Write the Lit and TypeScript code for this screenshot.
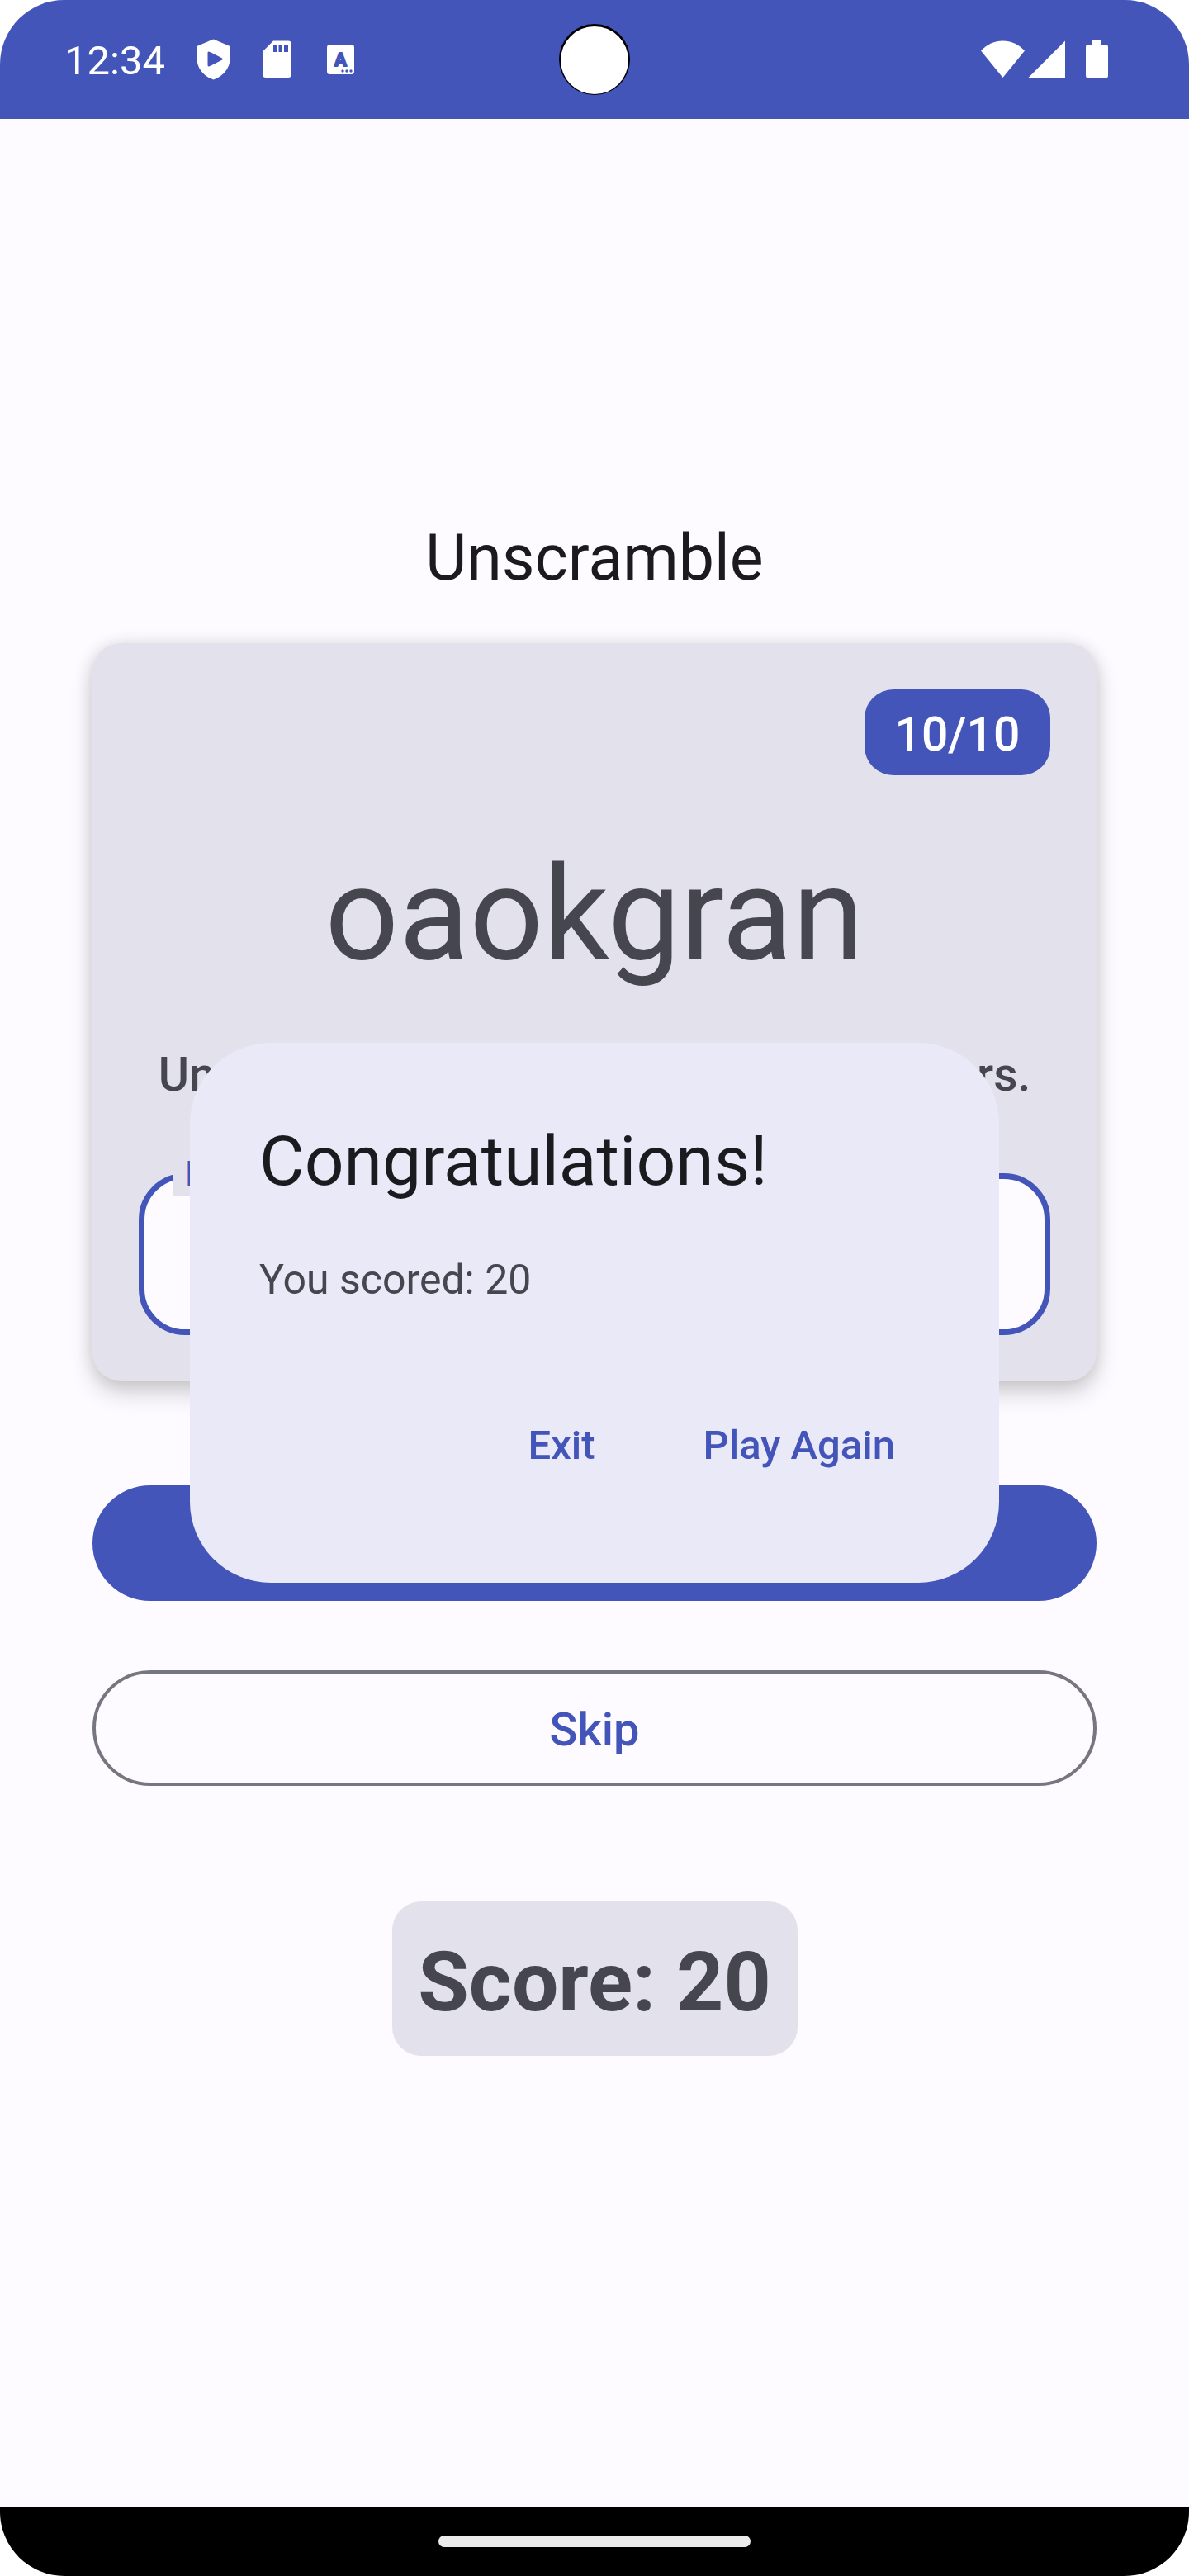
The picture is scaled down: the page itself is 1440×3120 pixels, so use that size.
import { LitElement, html, css } from "lit";
import { customElement, property, state } from "lit/decorators.js";

@customElement("status-bar")
class StatusBar extends LitElement {
  @property() time = "12:34";

  static styles = css`
    :host {
      display: block;
      background: #4355b9;
      color: #fff;
    }
    .bar {
      position: relative;
      display: flex;
      align-items: center;
      justify-content: space-between;
      height: 144px;
      padding: 0 98px 0 78px;
    }
    .group {
      display: flex;
      align-items: center;
    }
    .time {
      font-size: 49px;
      line-height: 56px;
      margin-right: 38px;
      padding-top: 4px;
    }
    svg {
      display: block;
      fill: #fff;
    }
    .shield {
      margin-right: 39px;
    }
    .sd {
      margin-right: 43px;
    }
    .glyph {
      fill: #4355b9;
      stroke: #4355b9;
      stroke-width: 2;
      stroke-linejoin: round;
      font: 700 22px Roboto, sans-serif;
    }
    .cut {
      fill: #4355b9;
      stroke: #4355b9;
      stroke-linejoin: round;
    }
    .slot {
      fill: #4355b9;
    }
    .wifi {
      margin-right: 4px;
    }
    .signal {
      margin-right: 25px;
    }
    .camera {
      position: absolute;
      left: 50%;
      top: 29px;
      width: 86px;
      height: 86px;
      transform: translateX(-50%);
    }
  `;

  render() {
    return html`
      <div class="bar">
        <div class="group">
          <span class="time">${this.time}</span>
          <svg class="shield" width="41" height="50" viewBox="0 0 41 50" aria-hidden="true">
            <path d="M20.5 0.5 40.5 9v15c0 12-8.500 21.500-20 25.500C9 45.500.5 36 .5 24V9Z" />
            <path class="cut" stroke-width="3" d="M15 17v15L30 24.500Z" />
          </svg>
          <svg class="sd" width="35" height="46" viewBox="0 0 35 46" aria-hidden="true">
            <path d="M13 0.500H31a4 4 0 0 1 4 4V41a4 4 0 0 1-4 4H4a4 4 0 0 1-4-4V13.500Z" />
            <path class="slot" d="M13 5.500h4.500v8.500H13zM19.500 5.500H24v8.500h-4.500zM26 5.500h5v8.500h-5z" />
          </svg>
          <svg width="33" height="38" viewBox="0 0 33 38" aria-hidden="true">
            <rect y="1" width="33" height="36" rx="3.500" />
            <text class="glyph" x="16.500" y="26.500" text-anchor="middle">A</text>
            <circle class="slot" cx="19" cy="33" r="1.700" />
            <circle class="slot" cx="24" cy="33" r="1.700" />
            <circle class="slot" cx="29" cy="33" r="1.700" />
          </svg>
        </div>
        <svg class="camera" viewBox="0 0 86 86" aria-hidden="true">
          <circle cx="43" cy="43" r="43" fill="#000" />
          <circle cx="43" cy="44" r="41" />
        </svg>
        <div class="group">
          <svg class="wifi" width="53" height="46" viewBox="0 0 53 46" aria-hidden="true">
            <path d="M0 12.500C7.500 4.500 16.500 0.500 26.500 0.500S45.500 4.500 53 12.500L26.500 45Z" />
          </svg>
          <svg class="signal" width="45" height="46" viewBox="0 0 45 46" aria-hidden="true">
            <path d="M45 0.500V45H0.500Z" />
          </svg>
          <svg width="27" height="46" viewBox="0 0 27 46" aria-hidden="true">
            <path d="M8 0h11v5h5a3 3 0 0 1 3 3v34.500a3 3 0 0 1-3 3H3a3 3 0 0 1-3-3V8a3 3 0 0 1 3-3h5Z" />
          </svg>
        </div>
      </div>
    `;
  }
}

@customElement("game-card")
class GameCard extends LitElement {
  @property() word = "";
  @property() count = "";

  static styles = css`
    :host {
      display: block;
    }
    .card {
      display: flex;
      flex-direction: column;
      padding: 56px;
      border-radius: 35px;
      background: #e2e1ec;
      color: #46464f;
      text-align: center;
      box-shadow: 0 14px 28px rgba(0, 0, 0, 0.18), 0 0 20px rgba(0, 0, 0, 0.1);
    }
    .count {
      box-sizing: border-box;
      align-self: flex-end;
      min-width: 225px;
      padding: 20px 35px 14px;
      border-radius: 35px;
      background: #4355b9;
      color: #fff;
      font-size: 57px;
      font-weight: 500;
      line-height: 70px;
    }
    .word {
      margin: 56px 0 0;
      font-size: 157px;
      font-weight: 400;
      line-height: 224px;
    }
    .hint {
      margin: 50px 0 0;
      font-size: 57px;
      font-weight: 500;
      line-height: 66px;
    }
    .field {
      position: relative;
      margin-top: 86px;
    }
    .label {
      position: absolute;
      left: 42px;
      top: -28px;
      padding: 2px 14px 0;
      background: #e2e1ec;
      color: #4355b9;
      font-size: 42px;
      line-height: 54px;
    }
    .input {
      display: block;
      box-sizing: border-box;
      width: 100%;
      height: 196px;
      padding: 0 56px;
      border: 7px solid #4355b9;
      border-radius: 56px;
      outline: none;
      background: #fdfbff;
      color: #1b1b1f;
      font: 400 56px/84px Roboto, sans-serif;
    }
  `;

  render() {
    return html`
      <section class="card">
        <div class="count">${this.count}</div>
        <h2 class="word">${this.word}</h2>
        <p class="hint">Unscramble the word using all the letters.</p>
        <div class="field">
          <input class="input" id="guess" type="text" autocomplete="off" />
          <label class="label" for="guess">Enter your word</label>
        </div>
      </section>
    `;
  }
}

@customElement("result-dialog")
class ResultDialog extends LitElement {
  @property({ type: Number }) score = 0;

  static styles = css`
    :host {
      display: block;
    }
    .dialog {
      box-sizing: border-box;
      width: 980px;
      max-width: 100%;
      padding: 88px 84px 84px;
      border-radius: 98px;
      background: #e9e9f7;
    }
    .title {
      margin: 0;
      color: #1b1b1f;
      font-size: 84px;
      font-weight: 400;
      line-height: 112px;
    }
    .text {
      margin: 52px 0 80px;
      color: #46464f;
      font-size: 50px;
      line-height: 70px;
    }
    .actions {
      display: flex;
      justify-content: flex-end;
      gap: 28px;
    }
    .action {
      min-width: 203px;
      height: 168px;
      padding: 4px 42px 0;
      border: 0;
      background: none;
      color: #4355b9;
      font: 500 49px/70px Roboto, sans-serif;
      cursor: pointer;
    }
  `;

  private send(name: string) {
    this.dispatchEvent(new CustomEvent(name));
  }

  render() {
    return html`
      <div class="dialog" role="dialog" aria-labelledby="title">
        <h2 class="title" id="title">Congratulations!</h2>
        <p class="text">You scored: ${this.score}</p>
        <div class="actions">
          <button class="action" @click=${() => this.send("exit")}>Exit</button>
          <button class="action" @click=${() => this.send("replay")}>Play Again</button>
        </div>
      </div>
    `;
  }
}

@customElement("app-root")
class AppRoot extends LitElement {
  @state() private open = true;
  @state() private score = 20;

  static styles = css`
    :host {
      display: block;
      background: #fff;
      font-family: Roboto, sans-serif;
    }
    .screen {
      display: flex;
      flex-direction: column;
      min-height: 100vh;
      border-radius: 78px;
      overflow: hidden;
      background: #fdfbff;
    }
    .main {
      position: relative;
      flex: 1;
      display: flex;
      flex-direction: column;
      justify-content: center;
      padding: 0 112px 64px;
    }
    .heading {
      margin: 0 0 54px;
      color: #1b1b1f;
      font-size: 77px;
      font-weight: 400;
      line-height: 98px;
      text-align: center;
    }
    .buttons {
      display: flex;
      flex-direction: column;
      gap: 84px;
      margin: 126px 0 140px;
    }
    .button {
      height: 140px;
      padding: 4px 84px 0;
      border: 0;
      border-radius: 70px;
      background: #4355b9;
      color: #fff;
      font: 500 56px/66px Roboto, sans-serif;
      cursor: pointer;
    }
    .outlined {
      border: 4px solid #767680;
      background: none;
      color: #4355b9;
    }
    .score {
      box-sizing: border-box;
      align-self: center;
      min-width: 491px;
      padding: 32px 28px 24px;
      border-radius: 35px;
      background: #e2e1ec;
      color: #46464f;
      font-size: 100px;
      font-weight: 700;
      line-height: 131px;
      text-align: center;
    }
    .overlay {
      position: absolute;
      inset: 0;
      display: grid;
      place-items: center;
    }
    .nav {
      display: flex;
      align-items: center;
      justify-content: center;
      height: 84px;
      background: #000;
    }
    .handle {
      width: 378px;
      height: 14px;
      border-radius: 7px;
      background: #ebebeb;
    }
  `;

  private replay() {
    this.open = false;
    this.score = 0;
  }

  render() {
    return html`
      <div class="screen">
        <status-bar></status-bar>
        <main class="main">
          <h1 class="heading">Unscramble</h1>
          <game-card word="oaokgran" count="10/10"></game-card>
          <div class="buttons">
            <button class="button">Submit</button>
            <button class="button outlined">Skip</button>
          </div>
          <div class="score">Score: ${this.score}</div>
          ${this.open
            ? html`<div class="overlay">
                <result-dialog
                  .score=${this.score}
                  @exit=${() => (this.open = false)}
                  @replay=${this.replay}
                ></result-dialog>
              </div>`
            : null}
        </main>
        <div class="nav"><div class="handle"></div></div>
      </div>
    `;
  }
}
